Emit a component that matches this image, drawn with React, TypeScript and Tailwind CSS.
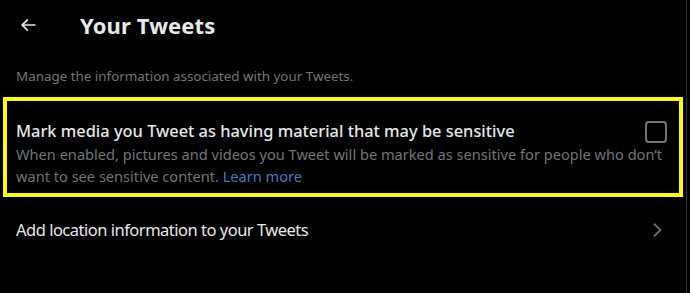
import React from 'react';

const font = { fontFamily: '"Noto Sans", "Open Sans", Arial, sans-serif' };

const App: React.FC = () => (
  <div className="w-[690px] h-[293px] bg-black flex overflow-hidden" style={font}>
    <div className="w-[687px] h-full border-r border-[#2f3336] flex flex-col">
      <div className="h-[50px] flex items-center px-4">
        <div className="w-[64px] flex items-center">
          <svg width="20" height="20" viewBox="0 0 24 24" className="ml-[2px] text-[#e7e9ea]">
            <path fill="currentColor" d="M7.414 13l5.043 5.04-1.414 1.42L3.586 12l7.457-7.46 1.414 1.42L7.414 11H21v2H7.414z" />
          </svg>
        </div>
        <h1 className="text-[22px] font-bold text-[#e7e9ea] leading-7 tracking-[0.1px]">Your Tweets</h1>
      </div>
      <p className="px-4 pt-[18px] pb-[13px] text-[13.4px] leading-4 text-[#71767b]">
        Manage the information associated with your Tweets.
      </p>
      <div className="mx-[3px] h-[100px] border-4 border-[#ffff00] px-[9px] pt-[19px]">
        <div className="flex items-start justify-between">
          <div className="text-[16.4px] leading-[22px] text-[#e7e9ea] font-medium">
            Mark media you Tweet as having material that may be sensitive
          </div>
          <div className="w-[22px] h-[22px] border-2 border-[#6e767d] rounded-[4px] mr-[3px] mt-[1px]" />
        </div>
        <p className="w-[655px] text-[14.6px] leading-[22px] text-[#71767b]">
          When enabled, pictures and videos you Tweet will be marked as sensitive for people who don’t want to see sensitive content.{' '}
          <span className="text-[#3f7ec0]">Learn more</span>
        </p>
      </div>
      <div className="h-[66px] flex items-center justify-between px-4">
        <span className="text-[16.5px] text-[#e7e9ea] tracking-[-0.5px]">Add location information to your Tweets</span>
        <svg width="20" height="20" viewBox="0 0 24 24" className="mr-[3px] text-[#71767b]">
          <path fill="currentColor" d="M14.586 12L7.543 4.96l1.414-1.42L17.414 12l-8.457 8.46-1.414-1.42L14.586 12z" />
        </svg>
      </div>
    </div>
  </div>
);

export default App;
